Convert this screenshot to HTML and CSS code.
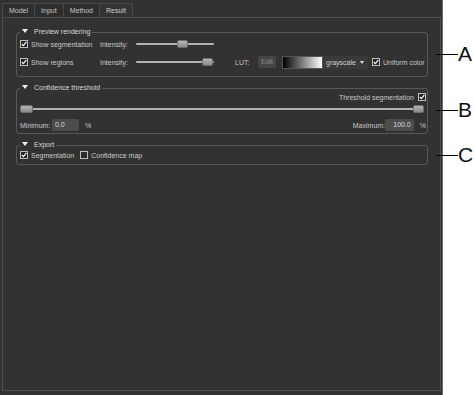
FILE: index.html
```html
<!DOCTYPE html>
<html>
<head>
<meta charset="utf-8">
<link rel="stylesheet" href="styles.css">
</head>
<body>
<div class="app">
  <div class="panel">
    <div class="tabs">
      <div class="tab">Model</div>
      <div class="tab">Input</div>
      <div class="tab">Method</div>
      <div class="tab active">Result</div>
    </div>
    <div class="pane">
      <fieldset class="group group-a">
        <legend><span class="tri"></span>Preview rendering</legend>
        <div class="row row1">
          <label class="check col1"><span class="cb"><svg viewBox="0 0 6 6"><path d="M0.8 3 L2.4 4.6 L5.3 1" /></svg></span>Show segmentation</label>
          <span class="lbl col2">Intensity:</span>
          <div class="slider col3"><span class="handle" style="left:41px"></span></div>
        </div>
        <div class="row row2">
          <label class="check col1"><span class="cb"><svg viewBox="0 0 6 6"><path d="M0.8 3 L2.4 4.6 L5.3 1" /></svg></span>Show regions</label>
          <span class="lbl col2">Intensity:</span>
          <div class="slider col3"><span class="handle" style="left:66px"></span></div>
          <span class="lut-lbl">LUT:</span>
          <span class="btn">Edit</span>
          <span class="grad"></span>
          <span class="combo">grayscale<span class="arrow"></span></span>
          <label class="check uni"><span class="cb"><svg viewBox="0 0 6 6"><path d="M0.8 3 L2.4 4.6 L5.3 1" /></svg></span>Uniform color</label>
        </div>
      </fieldset>

      <fieldset class="group group-b">
        <legend><span class="tri"></span>Confidence threshold</legend>
        <div class="row thresh">
          <label class="check rev">Threshold segmentation<span class="cb"><svg viewBox="0 0 6 6"><path d="M0.8 3 L2.4 4.6 L5.3 1" /></svg></span></label>
        </div>
        <div class="range">
          <span class="handle h-left"></span>
          <span class="handle h-right"></span>
        </div>
        <div class="row minmax">
          <span class="mm-lbl">Minimum:</span>
          <span class="num num-min">0.0</span>
          <span class="pct">%</span>
          <span class="spacer"></span>
          <span class="mm-lbl">Maximum:</span>
          <span class="num num-max">100.0</span>
          <span class="pct">%</span>
        </div>
      </fieldset>

      <fieldset class="group group-c">
        <legend><span class="tri"></span>Export</legend>
        <div class="row">
          <label class="check"><span class="cb"><svg viewBox="0 0 6 6"><path d="M0.8 3 L2.4 4.6 L5.3 1" /></svg></span>Segmentation</label>
          <label class="check conf"><span class="cb off"></span>Confidence map</label>
        </div>
      </fieldset>
    </div>
  </div>

  <div class="callout c-a"><span class="line"></span><span class="letter">A</span></div>
  <div class="callout c-b"><span class="line"></span><span class="letter">B</span></div>
  <div class="callout c-c"><span class="line"></span><span class="letter">C</span></div>
</div>
</body>
</html>
```

FILE: styles.css
```css
* { box-sizing: border-box; }

body {
  margin: 0;
  background: #ffffff;
  font-family: "Liberation Sans", Arial, sans-serif;
  font-size: 7px;
  color: #c8c8c8;
}

.app {
  position: relative;
  width: 474px;
  height: 395px;
}

.panel {
  width: 443px;
  height: 395px;
  background: #323232;
  border-right: 1px solid #6c6c6c;
  display: flex;
  flex-direction: column;
  padding: 3px 1px 4px 2px;
}

.tabs {
  display: flex;
  height: 14px;
  flex: none;
}

.tab {
  border: 1px solid #4a4a4a;
  border-bottom: none;
  margin-right: -1px;
  padding: 0 6px;
  line-height: 13px;
  background: #2e2e2e;
  color: #c4c4c4;
}

.tab.active {
  background: #343434;
  color: #d0d0d0;
}

.pane {
  flex: 1;
  border: 1px solid #4e4e4e;
  padding: 9px 12px 0 13px;
  display: flex;
  flex-direction: column;
  gap: 6px;
}

.group {
  margin: 0;
  border: 1px solid #585858;
  border-radius: 3px;
  padding: 0 1px 0 3px;
  min-width: 0;
}

.group legend {
  padding: 0 2px 0 2px;
  line-height: 10px;
  color: #d8d8d8;
}

.tri {
  display: inline-block;
  width: 0;
  height: 0;
  border-left: 3px solid transparent;
  border-right: 3px solid transparent;
  border-top: 4px solid #eeeeee;
  margin-right: 6px;
  vertical-align: 1px;
}

.row {
  display: flex;
  align-items: center;
}

.check {
  display: flex;
  align-items: center;
  gap: 3px;
  white-space: nowrap;
  color: #c8c8c8;
}

.lbl, .lut-lbl, .mm-lbl, .pct {
  color: #c8c8c8;
}

.cb {
  width: 8px;
  height: 8px;
  border: 1px solid #bdbdbd;
  background: #262626;
  display: flex;
  flex: none;
}

.cb svg {
  width: 6px;
  height: 6px;
}

.cb svg path {
  fill: none;
  stroke: #f2f2f2;
  stroke-width: 1.2;
}

/* Group A */
.row1 {
  height: 10px;
  margin-top: 2px;
}

.row2 {
  height: 14px;
  margin-top: 6px;
  margin-bottom: 7px;
}

.col1 { width: 80px; }
.col2 { width: 36px; }
.col3 { width: 78px; }

.slider {
  position: relative;
  height: 8px;
}

.slider::before,
.range::before {
  content: "";
  position: absolute;
  left: 0;
  right: 0;
  top: 3px;
  height: 2px;
  background: #b2b2b2;
  border-radius: 1px;
}

.handle {
  position: absolute;
  top: 0;
  width: 11px;
  height: 8px;
  border-radius: 2px;
  background: linear-gradient(#b4b4b4, #8a8a8a);
  border: 1px solid #707070;
}

.lut-lbl {
  margin-left: 21px;
  width: 23px;
}

.btn {
  width: 18px;
  height: 12px;
  line-height: 12px;
  text-align: center;
  background: #454545;
  color: #8a8a8a;
  border-radius: 2px;
}

.grad {
  margin-left: 6px;
  width: 41px;
  height: 13px;
  background: linear-gradient(to right, #000000, #ffffff);
  border: 1px solid #555555;
}

.combo {
  position: relative;
  width: 45px;
  height: 13px;
  line-height: 13px;
  padding-left: 3px;
  background: #3a3a3a;
  color: #d0d0d0;
}

.arrow {
  position: absolute;
  right: 4px;
  top: 5px;
  width: 0;
  height: 0;
  border-left: 2px solid transparent;
  border-right: 2px solid transparent;
  border-top: 3px solid #dddddd;
}

.uni {
  margin-left: 4px;
}

/* Group B */
.thresh {
  justify-content: flex-end;
  height: 10px;
  margin-top: -1px;
}

.rev {
  gap: 4px;
}

.range {
  position: relative;
  height: 8px;
  margin-top: 3px;
  margin-right: 2px;
}

.h-left { left: 0; width: 13px; }
.h-right { right: 0; }

.minmax {
  height: 12px;
  margin-top: 6px;
  margin-bottom: 2px;
}

.mm-lbl { width: 32px; }

.num {
  height: 12px;
  line-height: 12px;
  background: #4c4c4c;
  color: #dcdcdc;
  border-radius: 2px;
  padding: 0 3px;
}

.num-min { width: 27px; }
.num-max { width: 29px; text-align: right; }

.pct {
  margin-left: 6px;
}

.spacer { flex: 1; }

/* Group C */
.group-c .row {
  height: 10px;
  margin-bottom: 4px;
}

.conf {
  margin-left: 6px;
}

.cb.off {
  background: #2a2a2a;
}

/* Callouts */
.callout {
  position: absolute;
  left: 436px;
  height: 20px;
  display: flex;
  align-items: center;
}

.callout .line {
  width: 22px;
  height: 1px;
  background: #000000;
}

.callout .letter {
  font-size: 21px;
  line-height: 20px;
  color: #111111;
}

.c-a { top: 44px; }
.c-b { top: 100px; }
.c-c { top: 145px; }
```
